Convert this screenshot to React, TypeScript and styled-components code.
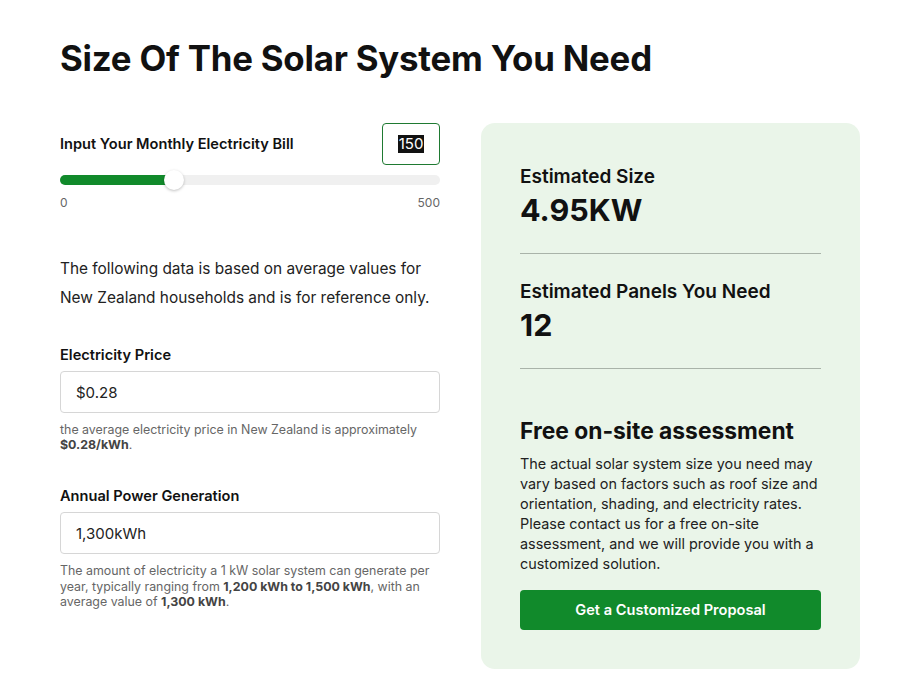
import React from "react";
import styled, { createGlobalStyle } from "styled-components";

const Global = createGlobalStyle`
  html, body { margin: 0; padding: 0; background: #fff; }
  body { font-family: Inter, "Noto Sans", Arial, sans-serif; color: #111; }
  * { box-sizing: border-box; }
`;

const Page = styled.div`
  padding: 35px 52px 0 60px;
  width: 912px;
`;

const Title = styled.h1`
  margin: 0 0 42px;
  font-size: 34.8px;
  line-height: 46px;
  font-weight: 700;
  letter-spacing: -0.2px;
  color: #111;
`;

const Columns = styled.div`
  display: flex;
  gap: 41px;
  align-items: flex-start;
`;

const Left = styled.div`
  width: 380px;
  display: flex;
  flex-direction: column;
`;

const BillRow = styled.div`
  display: flex;
  justify-content: space-between;
  align-items: center;
`;

const Label = styled.div`
  font-size: 14.6px;
  font-weight: 600;
  color: #111;
  line-height: 20px;
`;

const BillBox = styled.div`
  width: 58px;
  height: 42px;
  border: 1px solid #1f7a32;
  border-radius: 4px;
  display: flex;
  align-items: center;
  justify-content: center;
  font-size: 15px;
`;

const Selected = styled.span`
  background: #111;
  color: #fff;
  padding: 0 1px;
  line-height: 18px;
`;

const SliderWrap = styled.div`
  position: relative;
  margin-top: 10px;
  height: 10px;
  border-radius: 5px;
  background: #f0f0f0;
`;

const SliderFill = styled.div`
  height: 10px;
  border-radius: 5px;
  background: #118a2b;
`;

const Thumb = styled.div`
  position: absolute;
  top: -5px;
  width: 20px;
  height: 20px;
  margin-left: -10px;
  border-radius: 50%;
  background: #fff;
  box-shadow: 0 1px 3px rgba(0, 0, 0, 0.25);
`;

const Scale = styled.div`
  display: flex;
  justify-content: space-between;
  margin-top: 10px;
  font-size: 12px;
  color: #666;
  line-height: 16px;
`;

const Intro = styled.p`
  margin: 43px 0 0;
  font-size: 15.4px;
  line-height: 29px;
  color: #222;
`;

const Field = styled.div<{ $top: number }>`
  margin-top: ${(p) => p.$top}px;
  display: flex;
  flex-direction: column;
`;

const TextBox = styled.div`
  margin-top: 6px;
  height: 42px;
  border: 1px solid #d6d6d6;
  border-radius: 4px;
  padding: 0 15px;
  display: flex;
  align-items: center;
  font-size: 15px;
  color: #222;
`;

const Help = styled.p`
  margin: 9px 0 0;
  font-size: 12.4px;
  line-height: 15.2px;
  color: #666;
  b { color: #444; font-weight: 700; }
`;

const Card = styled.div`
  width: 379px;
  background: #eaf5e9;
  border-radius: 14px;
  padding: 42px 39px 39px;
  display: flex;
  flex-direction: column;
`;

const StatLabel = styled.div`
  font-size: 19px;
  font-weight: 600;
  line-height: 24px;
  color: #111;
`;

const StatValue = styled.div`
  margin-top: 3px;
  font-size: 30.5px;
  font-weight: 700;
  line-height: 36px;
  color: #111;
`;

const Divider = styled.hr`
  border: none;
  border-top: 1px solid #a9b3a9;
  margin: 25px 0 26px;
`;

const CardTitle = styled.h2`
  margin: 21px 0 0;
  font-size: 22.8px;
  line-height: 30px;
  font-weight: 700;
  color: #111;
`;

const CardText = styled.p`
  margin: 8px 0 0;
  font-size: 14.4px;
  line-height: 20px;
  color: #222;
`;

const Button = styled.button`
  margin-top: 16px;
  height: 40px;
  border: none;
  border-radius: 4px;
  background: #118a2b;
  color: #fff;
  font-family: inherit;
  font-size: 14.6px;
  font-weight: 600;
  cursor: pointer;
`;

export default function App() {
  const value = 150;
  const max = 500;
  const pct = (value / max) * 100;
  return (
    <>
      <Global />
      <Page>
        <Title>Size Of The Solar System You Need</Title>
        <Columns>
          <Left>
            <BillRow>
              <Label>Input Your Monthly Electricity Bill</Label>
              <BillBox>
                <Selected>150</Selected>
              </BillBox>
            </BillRow>
            <SliderWrap>
              <SliderFill style={{ width: `${pct}%` }} />
              <Thumb style={{ left: `${pct}%` }} />
            </SliderWrap>
            <Scale>
              <span>0</span>
              <span>500</span>
            </Scale>
            <Intro>
              The following data is based on average values for
              <br />
              New Zealand households and is for reference only.
            </Intro>
            <Field $top={33}>
              <Label>Electricity Price</Label>
              <TextBox>$0.28</TextBox>
              <Help>
                the average electricity price in New Zealand is approximately{" "}
                <b>$0.28/kWh</b>.
              </Help>
            </Field>
            <Field $top={34}>
              <Label>Annual Power Generation</Label>
              <TextBox>1,300kWh</TextBox>
              <Help>
                The amount of electricity a 1 kW solar system can generate per
                year, typically ranging from <b>1,200 kWh to 1,500 kWh</b>, with
                an average value of <b>1,300 kWh</b>.
              </Help>
            </Field>
          </Left>
          <Card>
            <StatLabel>Estimated Size</StatLabel>
            <StatValue>4.95KW</StatValue>
            <Divider />
            <StatLabel>Estimated Panels You Need</StatLabel>
            <StatValue>12</StatValue>
            <Divider />
            <CardTitle>Free on-site assessment</CardTitle>
            <CardText>
              The actual solar system size you need may vary based on factors
              such as roof size and orientation, shading, and electricity rates.
              Please contact us for a free on-site assessment, and we will
              provide you with a customized solution.
            </CardText>
            <Button>Get a Customized Proposal</Button>
          </Card>
        </Columns>
      </Page>
    </>
  );
}
